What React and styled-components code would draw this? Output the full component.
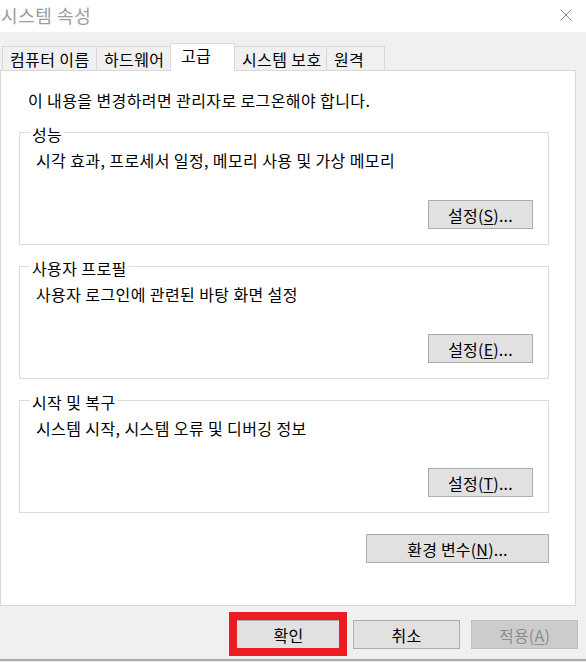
import React from 'react';
import styled, { createGlobalStyle } from 'styled-components';

const GlobalStyle = createGlobalStyle`
  html, body {
    margin: 0;
    padding: 0;
    background: #f0f0f0;
  }
  body {
    font-family: "Noto Sans CJK KR", "Noto Sans", sans-serif;
    color: #000;
  }
  * {
    box-sizing: border-box;
  }
`;

const tabs = [
  { label: '컴퓨터 이름', width: 95 },
  { label: '하드웨어', width: 75 },
  { label: '고급', width: 65, active: true },
  { label: '시스템 보호', width: 93 },
  { label: '원격', width: 59 },
];

const groups = [
  { title: '성능', text: '시각 효과, 프로세서 일정, 메모리 사용 및 가상 메모리', key: 'S' },
  { title: '사용자 프로필', text: '사용자 로그인에 관련된 바탕 화면 설정', key: 'E' },
  { title: '시작 및 복구', text: '시스템 시작, 시스템 오류 및 디버깅 정보', key: 'T' },
];

export default function App() {
  return (
    <Window>
      <GlobalStyle />
      <TitleBar>
        <Title>시스템 속성</Title>
        <svg width="12" height="12" viewBox="0 0 12 12">
          <path d="M0.5 0.5 L11.5 11.5 M11.5 0.5 L0.5 11.5" stroke="#8a8a8a" strokeWidth="1" fill="none" />
        </svg>
      </TitleBar>

      <Body>
        <TabStrip>
          {tabs.map((t) => (
            <Tab key={t.label} $width={t.width} $active={t.active}>{t.label}</Tab>
          ))}
        </TabStrip>

        <Panel>
          <Notice>이 내용을 변경하려면 관리자로 로그온해야 합니다.</Notice>

          {groups.map((g) => (
            <Group key={g.title}>
              <Legend>{g.title}</Legend>
              <Description>{g.text}</Description>
              <SettingsButton>설정(<u>{g.key}</u>)...</SettingsButton>
            </Group>
          ))}

          <EnvButton>환경 변수(<u>N</u>)...</EnvButton>
        </Panel>

        <Footer>
          <Highlighted>
            <DialogButton>확인</DialogButton>
            <RedMark />
          </Highlighted>
          <DialogButton>취소</DialogButton>
          <DialogButton disabled>적용(<u>A</u>)</DialogButton>
        </Footer>
      </Body>
      <BottomEdge />
    </Window>
  );
}

const Window = styled.div`
  width: 586px;
  height: 662px;
  display: flex;
  flex-direction: column;
  background: #f0f0f0;
  overflow: hidden;
  font-size: 16px;
  letter-spacing: 0.4px;
`;

const TitleBar = styled.div`
  height: 32px;
  flex-shrink: 0;
  background: #fff;
  display: flex;
  align-items: center;
  justify-content: space-between;
  padding: 0 14px 2px 1px;
`;

const Title = styled.div`
  font-size: 18px;
  line-height: 24px;
  letter-spacing: 0.6px;
  color: #9d9d9d;
`;

const Body = styled.div`
  padding-top: 11px;
  display: flex;
  flex-direction: column;
`;

const TabStrip = styled.div`
  height: 27px;
  display: flex;
  align-items: flex-end;
  padding-left: 2px;
`;

const Tab = styled.div`
  width: ${(p) => p.$width}px;
  height: ${(p) => (p.$active ? 28 : 24)}px;
  margin-left: -1px;
  margin-bottom: ${(p) => (p.$active ? -1 : 0)}px;
  padding: ${(p) => (p.$active ? '0 0 0 10px' : '1px 0 0 7px')};
  border: 1px solid #d9d9d9;
  border-bottom: none;
  background: ${(p) => (p.$active ? '#fff' : '#f0f0f0')};
  line-height: 22px;
  white-space: nowrap;
  position: relative;
  z-index: ${(p) => (p.$active ? 1 : 0)};
  &:first-child {
    margin-left: 0;
  }
`;

const Panel = styled.div`
  width: 576px;
  height: 536px;
  background: #fff;
  border: 1px solid #d9d9d9;
  padding: 18px 26px 0 18px;
  display: flex;
  flex-direction: column;
`;

const Notice = styled.div`
  line-height: 22px;
  padding-left: 9px;
`;

const Group = styled.div`
  position: relative;
  height: 113px;
  margin-top: 21px;
  border: 1px solid #dcdcdc;
  padding: 17px 15px 15px 16px;
  display: flex;
  flex-direction: column;
`;

const Legend = styled.span`
  position: absolute;
  top: -9px;
  left: 10px;
  padding: 0 2px;
  background: #fff;
  line-height: 20px;
`;

const Description = styled.div`
  line-height: 20px;
`;

const Button = styled.button`
  height: 29px;
  padding: 0;
  background: #e1e1e1;
  border: 1px solid #adadad;
  border-radius: 0;
  font-family: inherit;
  font-size: 16px;
  letter-spacing: 0.2px;
  line-height: 20px;
  color: #000;
  u {
    text-underline-offset: 2px;
  }
`;

const SettingsButton = styled(Button)`
  width: 105px;
  margin-top: auto;
  align-self: flex-end;
`;

const EnvButton = styled(Button)`
  width: 183px;
  margin-top: 21px;
  align-self: flex-end;
`;

const Footer = styled.div`
  margin-top: 14px;
  display: flex;
  justify-content: flex-end;
  gap: 11px;
  padding-right: 8px;
`;

const DialogButton = styled(Button)`
  width: 107px;
  &:disabled {
    background: #cccccc;
    border-color: #bfbfbf;
    color: #8c8c8c;
  }
`;

const Highlighted = styled.div`
  position: relative;
  display: flex;
`;

const RedMark = styled.span`
  position: absolute;
  top: -8px;
  left: -6px;
  right: -5px;
  bottom: -7px;
  border: 8px solid #ed1c24;
  pointer-events: none;
`;

const BottomEdge = styled.div`
  margin-top: auto;
  margin-bottom: 1px;
  height: 2px;
  background: #a9a9a9;
`;
